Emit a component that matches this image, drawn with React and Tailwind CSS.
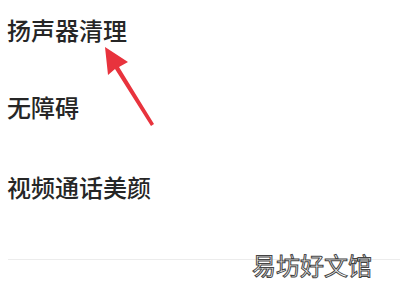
export default function App() {
  return (
    <div
      className="relative w-[400px] h-[300px] overflow-hidden bg-white"
      style={{ fontFamily: '"Noto Sans CJK SC", "Noto Sans", sans-serif' }}
    >
      {/* Settings list */}
      <div className="flex flex-col pl-[7px] text-[24px] leading-[24px] font-medium text-[#262626]">
        <div className="mt-[18px]">扬声器清理</div>
        <div className="mt-[53px]">无障碍</div>
        <div className="mt-[56px]">视频通话美颜</div>
      </div>
      <div className="ml-[8px] mt-[60px] h-px bg-[#ececec]" />

      {/* Red arrow */}
      <svg className="absolute left-0 top-0" width="400" height="300">
        <polygon
          points="105,47 128,62 119,67 154,124 151,126 115,69 108,75"
          fill="#e8333d"
        />
      </svg>

      {/* Watermark */}
      <div
        className="absolute left-[252px] top-[250px] text-[24px] leading-[30px] text-white"
        style={{ WebkitTextStroke: "1px #444" }}
      >
        易坊好文馆
      </div>
    </div>
  );
}
